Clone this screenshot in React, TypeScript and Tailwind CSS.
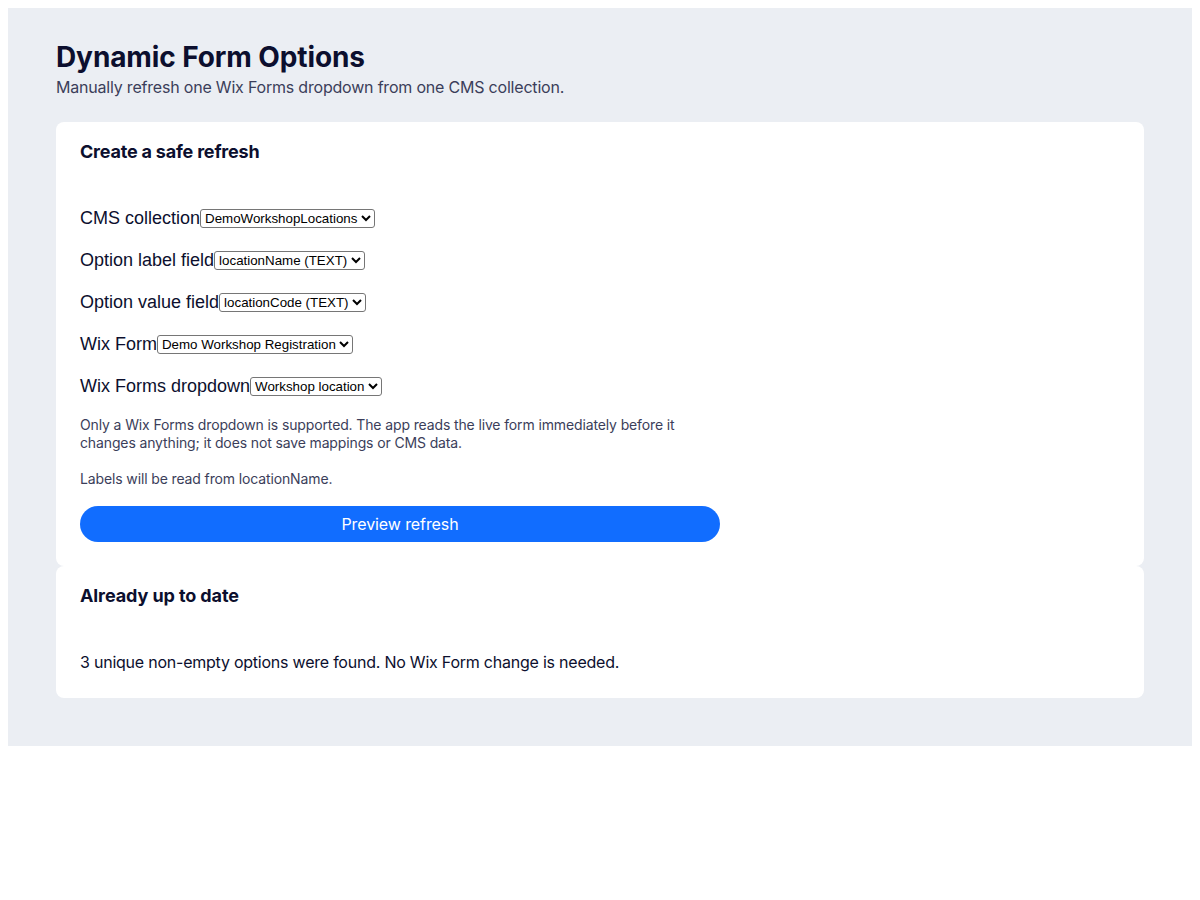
import React from "react";

const selectCls =
  "appearance-auto bg-white text-black border border-[#767676] rounded-[3px] text-[13.333px] leading-[normal] font-['Liberation_Sans',Arial,sans-serif] px-0 py-0 h-[19px] align-middle tracking-normal";

function Row({ label, value }: { label: string; value: string }) {
  return (
    <div className="flex items-center h-[26px] text-[18px] text-[#0c0f2e] tracking-normal font-['Liberation_Sans',Arial,sans-serif]">
      <span>{label}</span>
      <select className={selectCls} defaultValue={value}>
        <option value={value}>{value}</option>
      </select>
    </div>
  );
}

export default function App() {
  return (
    <div className="p-2 bg-white font-['Inter',sans-serif]">
      <div className="bg-[#ebeef3] px-12 pt-[32px] pb-12">
        <h1 className="text-[28px] leading-[35px] font-bold text-[#0c0f2e] tracking-[-0.1px]">Dynamic Form Options</h1>
        <p className="text-[16px] leading-[24px] text-[#3b3e5a] tracking-[-0.2px]">
          Manually refresh one Wix Forms dropdown from one CMS collection.
        </p>
        <div className="mt-[23px] bg-white rounded-lg px-6 pt-[18px] pb-6">
          <h2 className="text-[18px] leading-[24px] font-bold text-[#0c0f2e] tracking-[-0.2px]">Create a safe refresh</h2>
          <div className="mt-[41px] flex flex-col gap-4">
            <Row label="CMS collection" value="DemoWorkshopLocations" />
            <Row label="Option label field" value="locationName (TEXT)" />
            <Row label="Option value field" value="locationCode (TEXT)" />
            <Row label="Wix Form" value="Demo Workshop Registration" />
            <Row label="Wix Forms dropdown" value="Workshop location" />
          </div>
          <div className="w-[640px] mt-[17px] text-[14px] leading-[18px] text-[#3b3e5a] tracking-[-0.13px]">
            <p>
              Only a Wix Forms dropdown is supported. The app reads the live form immediately before it changes
              anything; it does not save mappings or CMS data.
            </p>
            <p className="mt-[18px]">Labels will be read from locationName.</p>
            <button className="mt-[18px] w-full h-9 rounded-full bg-[#116dff] text-white text-[16px] tracking-[-0.1px]">
              Preview refresh
            </button>
          </div>
        </div>
        <div className="bg-white rounded-lg px-6 pt-[18px] pb-6">
          <h2 className="text-[18px] leading-[24px] font-bold text-[#0c0f2e] tracking-[-0.1px]">Already up to date</h2>
          <p className="mt-[42px] text-[16px] leading-[24px] text-[#0c0f2e] tracking-[-0.23px]">
            3 unique non-empty options were found. No Wix Form change is needed.
          </p>
        </div>
      </div>
    </div>
  );
}
